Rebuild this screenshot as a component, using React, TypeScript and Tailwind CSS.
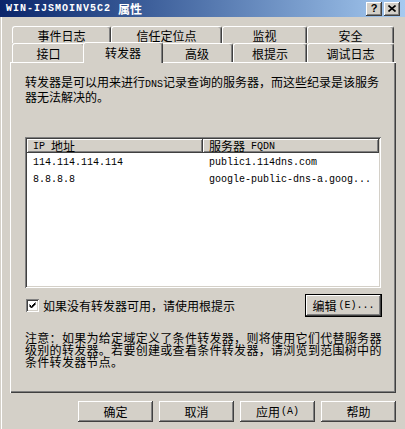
const cjk = "font-['Noto_Sans_CJK_SC',sans-serif]";
const mono = "font-['Liberation_Mono',monospace] text-[10px]";
const raised =
  'shadow-[inset_-1px_-1px_#404040,inset_1px_1px_#ffffff,inset_-2px_-2px_#808080,inset_2px_2px_#d4d0c8]';
const sunken =
  'shadow-[inset_1px_1px_#808080,inset_-1px_-1px_#ffffff,inset_2px_2px_#404040,inset_-2px_-2px_#d4d0c8]';

const rowOne = [
  { label: '事件日志', w: 'w-[99px]' },
  { label: '信任定位点', w: 'w-[111px]' },
  { label: '监视', w: 'w-[85px]' },
  { label: '安全', w: 'w-[87px]' },
];

const rowTwo = [
  { label: '接口', w: 'w-[73px]' },
  { label: '转发器', w: 'w-[80px]', selected: true },
  { label: '高级', w: 'w-[72px]' },
  { label: '根提示', w: 'w-[74px]' },
  { label: '调试日志', w: 'w-[87px]' },
];

const forwarders = [
  { ip: '114.114.114.114', fqdn: 'public1.114dns.com' },
  { ip: '8.8.8.8', fqdn: 'google-public-dns-a.goog...' },
];

function Tab({ label, w, selected, h }: { label: string; w: string; selected?: boolean; h: string }) {
  return (
    <div
      className={`flex shrink-0 items-center justify-center rounded-t-[3px] border-l border-r border-t border-l-white border-r-[#404040] border-t-white bg-[#d4d0c8] shadow-[inset_-1px_0_#808080] text-[12px] ${cjk} ${w} ${
        selected ? 'relative z-10 -mx-[2px] -mb-[1px] h-[21px]' : `${h} pt-[1px]`
      }`}
    >
      {label}
    </div>
  );
}

function Button({ children, className = '' }: { children: React.ReactNode; className?: string }) {
  return (
    <div className={`flex h-[21px] w-[75px] items-center justify-center bg-[#d4d0c8] text-[12px] ${raised} ${className}`}>
      {children}
    </div>
  );
}

export default function App() {
  return (
    <div
      className={`h-[429px] w-[405px] overflow-hidden bg-[#d4d0c8] text-black shadow-[inset_1px_0_#d4d0c8,inset_2px_0_#ffffff] ${cjk}`}
    >
      {/* title bar */}
      <div className="flex h-[17px] items-center bg-linear-to-r from-[#0a246a] to-[#a6caf0] pl-[6px] pr-[5px] text-white">
        <span className="font-['Liberation_Mono',monospace] text-[10px] font-bold tracking-[1px]">WIN-IJSMOINV5C2</span>
        <span className="ml-[7px] text-[12px] font-bold leading-none">属性</span>
        <div className="ml-auto flex gap-[2px]">
          <div className={`flex h-[14px] w-[16px] items-center justify-center bg-[#d4d0c8] text-black ${raised}`}>
            <span className="font-['Liberation_Sans',sans-serif] text-[11px] font-bold leading-none">?</span>
          </div>
          <div className={`flex h-[14px] w-[16px] items-center justify-center bg-[#d4d0c8] ${raised}`}>
            <svg width="8" height="7" viewBox="0 0 8 7" className="-mt-[1px]">
              <path d="M0.5 0.5 L7.5 6.5 M7.5 0.5 L0.5 6.5" stroke="#000" strokeWidth="1.6" />
            </svg>
          </div>
        </div>
      </div>

      {/* tabs */}
      <div className="pl-[12px] pt-[9px]">
        <div className="flex h-[17px]">
          {rowOne.map((t) => (
            <Tab key={t.label} label={t.label} w={t.w} h="h-[17px] pt-[2px]" />
          ))}
        </div>
        <div className="flex h-[19px] items-end">
          {rowTwo.map((t) => (
            <Tab key={t.label} label={t.label} w={t.w} selected={t.selected} h="h-[19px]" />
          ))}
        </div>
      </div>

      {/* page */}
      <div className="ml-[10px] h-[331px] w-[386px] bg-[#d4d0c8] pl-[15px] pt-[14px] shadow-[inset_1px_1px_#ffffff,inset_-1px_-1px_#404040,inset_-2px_-2px_#808080]">
        <p className="text-[12px] leading-[12px]">
          转发器是可以用来进行<span className={mono}>DNS</span>记录查询的服务器，而这些纪录是该服务
          <br />
          器无法解决的。
        </p>

        <div className={`mt-[34px] h-[151px] w-[356px] bg-white p-[2px] ${sunken}`}>
          <div className="flex h-[14px] bg-[#d4d0c8]">
            <div className={`flex w-[176px] items-center pl-[6px] text-[12px] ${raised}`}>
              <span className={mono}>IP</span>
              <span className="ml-[6px] leading-none">地址</span>
            </div>
            <div className={`flex w-[176px] items-center pl-[6px] text-[12px] ${raised}`}>
              <span className="leading-none">服务器</span>
              <span className={`${mono} ml-[6px]`}>FQDN</span>
            </div>
          </div>
          <div className="pt-[1px]">
            {forwarders.map((f) => (
              <div key={f.ip} className={`flex h-[17px] items-center ${mono}`}>
                <span className="w-[176px] pl-[6px]">{f.ip}</span>
                <span className="pl-[6px]">{f.fqdn}</span>
              </div>
            ))}
          </div>
        </div>

        <div className="mt-[7px] flex h-[21px] w-[357px] items-center">
          <div className={`ml-[1px] flex h-[13px] w-[13px] items-center justify-center bg-white ${sunken}`}>
            <svg width="7" height="7" viewBox="0 0 7 7">
              <path d="M0.5 2.5 L2.5 4.5 L6.5 0.5 M0.5 3.5 L2.5 5.5 L6.5 1.5 M0.5 4 L2.5 6 L6.5 2" stroke="#000" strokeWidth="1" fill="none" />
            </svg>
          </div>
          <span className="ml-[4px] text-[12px]">如果没有转发器可用，请使用根提示</span>
          <div className="ml-auto border border-black">
            <Button className="h-[19px] w-[72px] gap-[2px]">
              <span>编辑</span>
              <span className={mono}>(E)...</span>
            </Button>
          </div>
        </div>

        <p className="mt-[16px] text-[12px] leading-[12px] tracking-[0.3px]">
          注意：如果为给定域定义了条件转发器，则将使用它们代替服务器
          <br />
          级别的转发器。若要创建或查看条件转发器，请浏览到范围树中的
          <br />
          条件转发器节点。
        </p>
      </div>

      {/* dialog buttons */}
      <div className="mt-[8px] flex gap-[6px] pl-[78px]">
        <Button>确定</Button>
        <Button>取消</Button>
        <Button>
          应用<span className={`${mono} ml-[1px]`}>(A)</span>
        </Button>
        <Button>帮助</Button>
      </div>
    </div>
  );
}
